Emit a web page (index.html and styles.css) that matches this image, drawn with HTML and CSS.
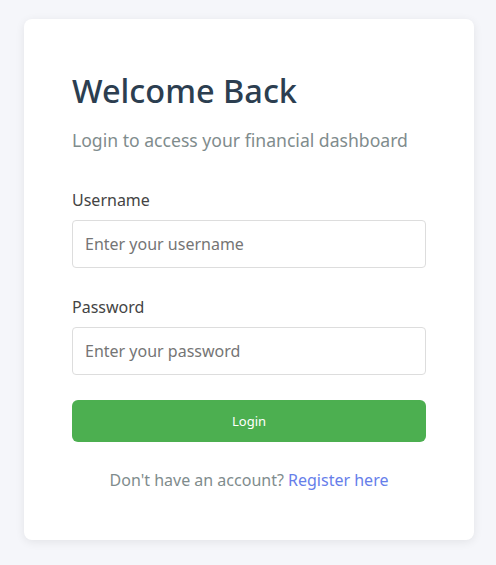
FILE: index.html
```html
<!DOCTYPE html>
<html lang="en">
<head>
<meta charset="utf-8">
<title>Login</title>
<link rel="stylesheet" href="styles.css">
</head>
<body>
<main class="page">
  <section class="card">
    <h1 class="title">Welcome Back</h1>
    <p class="subtitle">Login to access your financial dashboard</p>
    <form class="form">
      <div class="field">
        <label class="label" for="username">Username</label>
        <input class="input" id="username" type="text" placeholder="Enter your username">
      </div>
      <div class="field">
        <label class="label" for="password">Password</label>
        <input class="input" id="password" type="password" placeholder="Enter your password">
      </div>
      <button class="btn" type="button">Login</button>
    </form>
    <p class="footer">Don't have an account? <a class="link" href="#">Register here</a></p>
  </section>
</main>
</body>
</html>
```
FILE: styles.css
```css
* { box-sizing: border-box; }
html, body { margin: 0; padding: 0; }
body {
  background: #f5f6fa;
  font-family: "Noto Sans", "Open Sans", sans-serif;
  height: 565px;
}
.page {
  padding: 19px 0 0 24px;
}
.card {
  width: 450px;
  background: #ffffff;
  border-radius: 8px;
  box-shadow: 0 2px 10px rgba(0, 0, 0, 0.08);
  padding: 48px 48px 46px;
}
.title {
  margin: 0;
  font-size: 32.5px;
  font-weight: 500;
  line-height: 48px;
  color: #2c3e50;
}
.subtitle {
  margin: 12px 0 0;
  font-size: 17.6px;
  line-height: 26px;
  color: #7f8c8d;
}
.form {
  margin-top: 35px;
  display: flex;
  flex-direction: column;
}
.field {
  display: flex;
  flex-direction: column;
  margin-bottom: 27px;
}
.field + .field {
  margin-bottom: 25px;
}
.label {
  font-size: 16px;
  line-height: 24px;
  color: #444;
  margin-bottom: 8px;
}
.input {
  height: 48px;
  border: 1px solid #ddd;
  border-radius: 4px;
  padding: 0 12px;
  font-family: inherit;
  font-size: 16px;
  color: #333;
}
.input::placeholder { color: #757575; }
.btn {
  margin-top: 0;
  height: 42px;
  border: none;
  border-radius: 6px;
  background: #4caf50;
  color: #fff;
  font-family: inherit;
  font-size: 13px;
}
.footer {
  margin: 24px 0 0;
  text-align: center;
  font-size: 16px;
  line-height: 28px;
  color: #7f8c8d;
}
.link {
  color: #667eea;
  text-decoration: none;
}
```
